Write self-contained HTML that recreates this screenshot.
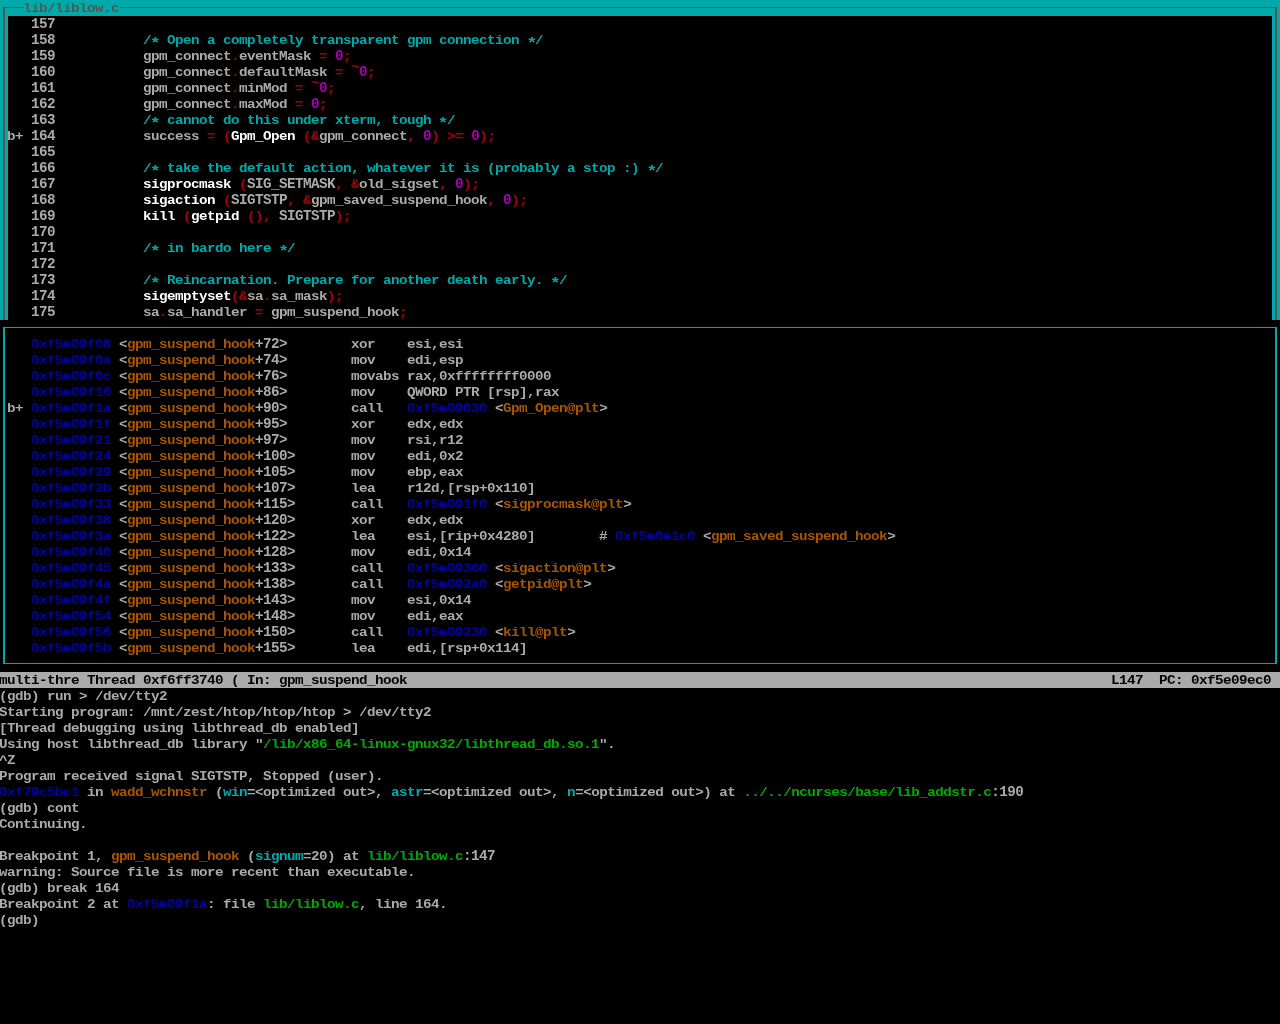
<!DOCTYPE html>
<html lang="en">
<head>
<meta charset="utf-8">
<title>gdb - lib/liblow.c</title>
<style>
html,body{margin:0;padding:0;background:#000;}
body{width:1280px;height:1024px;overflow:hidden;position:relative;}
#scr{will-change:transform;position:absolute;left:0;top:0;width:1280px;height:1024px;background:#000;overflow:hidden;
 font-family:"Liberation Mono","DejaVu Sans Mono",monospace;font-size:13.33px;font-weight:bold;line-height:16px;
 letter-spacing:-0.52161px;font-kerning:none;font-variant-ligatures:none;white-space:pre;color:#AAAAAA;tab-size:8;}
.bx{position:absolute;}
.ln{position:absolute;left:-0.779px;width:1200px;transform-origin:0 0;transform:scaleX(1.07);height:16px;margin:0;overflow:visible;}
.ln span.t{position:relative;top:-5px;}
.ln span.a{display:inline-block;position:relative;top:4px;transform:scale(1.25,1.15);}
.ln span.u{display:inline-block;transform-origin:0 11px;transform:scaleY(1.12);}
.k{color:#000000}.r{color:#AA0000}.g{color:#00AA00}.y{color:#AA5500}.b{color:#0000AA}.m{color:#AA00AA}
.c{color:#00AAAA}.w{color:#AAAAAA}.d{color:#555555}.h{color:#FFFFFF}
</style>
</head>
<body>
<div id="scr">
<div class="bx" style="left:0px;top:0px;width:1280px;height:16px;background:#00AAAA"></div>
<div class="bx" style="left:0px;top:16px;width:8px;height:304px;background:#00AAAA"></div>
<div class="bx" style="left:1272px;top:16px;width:8px;height:304px;background:#00AAAA"></div>
<div class="bx" style="left:3px;top:7px;width:21px;height:1px;background:#555555"></div>
<div class="bx" style="left:120px;top:7px;width:1157px;height:1px;background:#555555"></div>
<div class="bx" style="left:3px;top:7px;width:2px;height:313px;background:#555555"></div>
<div class="bx" style="left:1275px;top:7px;width:2px;height:313px;background:#555555"></div>
<div class="bx" style="left:3px;top:327px;width:1274px;height:1px;background:#00AAAA"></div>
<div class="bx" style="left:3px;top:663px;width:1274px;height:1px;background:#00AAAA"></div>
<div class="bx" style="left:3px;top:327px;width:2px;height:337px;background:#00AAAA"></div>
<div class="bx" style="left:1275px;top:327px;width:2px;height:337px;background:#00AAAA"></div>
<div class="bx" style="left:0px;top:672px;width:1280px;height:16px;background:#AAAAAA"></div>
<div class="ln" style="top:1px">   <span class="d">lib/liblow.c</span></div>
<div class="ln" style="top:17px">    <span class="u">157</span></div>
<div class="ln" style="top:33px">    <span class="u">158</span>           <span class="c">/<span class="a">*</span> Open a completely transparent gpm connection <span class="a">*</span>/</span></div>
<div class="ln" style="top:49px">    <span class="u">159</span>           gpm_connect<span class="r">.</span>eventMask <span class="r">=</span> <span class="m u">0</span><span class="r">;</span></div>
<div class="ln" style="top:65px">    <span class="u">160</span>           gpm_connect<span class="r">.</span>defaultMask <span class="r">=</span> <span class="r t">~</span><span class="m u">0</span><span class="r">;</span></div>
<div class="ln" style="top:81px">    <span class="u">161</span>           gpm_connect<span class="r">.</span>minMod <span class="r">=</span> <span class="r t">~</span><span class="m u">0</span><span class="r">;</span></div>
<div class="ln" style="top:97px">    <span class="u">162</span>           gpm_connect<span class="r">.</span>maxMod <span class="r">=</span> <span class="m u">0</span><span class="r">;</span></div>
<div class="ln" style="top:113px">    <span class="u">163</span>           <span class="c">/<span class="a">*</span> cannot do this under xterm, tough <span class="a">*</span>/</span></div>
<div class="ln" style="top:129px"> b+ <span class="u">164</span>           success <span class="r">=</span> <span class="r">(</span><span class="h">Gpm_Open</span> <span class="r">(&amp;</span>gpm_connect<span class="r">,</span> <span class="m u">0</span><span class="r">)</span> <span class="r">&gt;=</span> <span class="m u">0</span><span class="r">);</span></div>
<div class="ln" style="top:145px">    <span class="u">165</span></div>
<div class="ln" style="top:161px">    <span class="u">166</span>           <span class="c">/<span class="a">*</span> take the default action, whatever it is (probably a stop :) <span class="a">*</span>/</span></div>
<div class="ln" style="top:177px">    <span class="u">167</span>           <span class="h">sigprocmask</span> <span class="r">(</span><span class="u">SIG_SETMASK</span><span class="r">,</span> <span class="r">&amp;</span>old_sigset<span class="r">,</span> <span class="m u">0</span><span class="r">);</span></div>
<div class="ln" style="top:193px">    <span class="u">168</span>           <span class="h">sigaction</span> <span class="r">(</span><span class="u">SIGTSTP</span><span class="r">,</span> <span class="r">&amp;</span>gpm_saved_suspend_hook<span class="r">,</span> <span class="m u">0</span><span class="r">);</span></div>
<div class="ln" style="top:209px">    <span class="u">169</span>           <span class="h">kill</span> <span class="r">(</span><span class="h">getpid</span> <span class="r">(),</span> <span class="u">SIGTSTP</span><span class="r">);</span></div>
<div class="ln" style="top:225px">    <span class="u">170</span></div>
<div class="ln" style="top:241px">    <span class="u">171</span>           <span class="c">/<span class="a">*</span> in bardo here <span class="a">*</span>/</span></div>
<div class="ln" style="top:257px">    <span class="u">172</span></div>
<div class="ln" style="top:273px">    <span class="u">173</span>           <span class="c">/<span class="a">*</span> Reincarnation. Prepare for another death early. <span class="a">*</span>/</span></div>
<div class="ln" style="top:289px">    <span class="u">174</span>           <span class="h">sigemptyset</span><span class="r">(&amp;</span>sa<span class="r">.</span>sa_mask<span class="r">);</span></div>
<div class="ln" style="top:305px">    <span class="u">175</span>           sa<span class="r">.</span>sa_handler <span class="r">=</span> gpm_suspend_hook<span class="r">;</span></div>
<div class="ln" style="top:337px">    <span class="b">0xf5e09f08</span> &lt;<span class="y">gpm_suspend_hook</span><span class="u">+72&gt;</span>        xor    esi,esi</div>
<div class="ln" style="top:353px">    <span class="b">0xf5e09f0a</span> &lt;<span class="y">gpm_suspend_hook</span><span class="u">+74&gt;</span>        mov    edi,esp</div>
<div class="ln" style="top:369px">    <span class="b">0xf5e09f0c</span> &lt;<span class="y">gpm_suspend_hook</span><span class="u">+76&gt;</span>        movabs rax,0xffffffff0000</div>
<div class="ln" style="top:385px">    <span class="b">0xf5e09f16</span> &lt;<span class="y">gpm_suspend_hook</span><span class="u">+86&gt;</span>        mov    QWORD PTR [rsp],rax</div>
<div class="ln" style="top:401px"> b+ <span class="b">0xf5e09f1a</span> &lt;<span class="y">gpm_suspend_hook</span><span class="u">+90&gt;</span>        call   <span class="b">0xf5e09030</span> &lt;<span class="y">Gpm_Open@plt</span>&gt;</div>
<div class="ln" style="top:417px">    <span class="b">0xf5e09f1f</span> &lt;<span class="y">gpm_suspend_hook</span><span class="u">+95&gt;</span>        xor    edx,edx</div>
<div class="ln" style="top:433px">    <span class="b">0xf5e09f21</span> &lt;<span class="y">gpm_suspend_hook</span><span class="u">+97&gt;</span>        mov    rsi,r12</div>
<div class="ln" style="top:449px">    <span class="b">0xf5e09f24</span> &lt;<span class="y">gpm_suspend_hook</span><span class="u">+100&gt;</span>       mov    edi,0x2</div>
<div class="ln" style="top:465px">    <span class="b">0xf5e09f29</span> &lt;<span class="y">gpm_suspend_hook</span><span class="u">+105&gt;</span>       mov    ebp,eax</div>
<div class="ln" style="top:481px">    <span class="b">0xf5e09f2b</span> &lt;<span class="y">gpm_suspend_hook</span><span class="u">+107&gt;</span>       lea    r12d,[rsp+0x110]</div>
<div class="ln" style="top:497px">    <span class="b">0xf5e09f33</span> &lt;<span class="y">gpm_suspend_hook</span><span class="u">+115&gt;</span>       call   <span class="b">0xf5e091f0</span> &lt;<span class="y">sigprocmask@plt</span>&gt;</div>
<div class="ln" style="top:513px">    <span class="b">0xf5e09f38</span> &lt;<span class="y">gpm_suspend_hook</span><span class="u">+120&gt;</span>       xor    edx,edx</div>
<div class="ln" style="top:529px">    <span class="b">0xf5e09f3a</span> &lt;<span class="y">gpm_suspend_hook</span><span class="u">+122&gt;</span>       lea    esi,[rip+0x4280]        # <span class="b">0xf5e0e1c0</span> &lt;<span class="y">gpm_saved_suspend_hook</span>&gt;</div>
<div class="ln" style="top:545px">    <span class="b">0xf5e09f40</span> &lt;<span class="y">gpm_suspend_hook</span><span class="u">+128&gt;</span>       mov    edi,0x14</div>
<div class="ln" style="top:561px">    <span class="b">0xf5e09f45</span> &lt;<span class="y">gpm_suspend_hook</span><span class="u">+133&gt;</span>       call   <span class="b">0xf5e09360</span> &lt;<span class="y">sigaction@plt</span>&gt;</div>
<div class="ln" style="top:577px">    <span class="b">0xf5e09f4a</span> &lt;<span class="y">gpm_suspend_hook</span><span class="u">+138&gt;</span>       call   <span class="b">0xf5e092a0</span> &lt;<span class="y">getpid@plt</span>&gt;</div>
<div class="ln" style="top:593px">    <span class="b">0xf5e09f4f</span> &lt;<span class="y">gpm_suspend_hook</span><span class="u">+143&gt;</span>       mov    esi,0x14</div>
<div class="ln" style="top:609px">    <span class="b">0xf5e09f54</span> &lt;<span class="y">gpm_suspend_hook</span><span class="u">+148&gt;</span>       mov    edi,eax</div>
<div class="ln" style="top:625px">    <span class="b">0xf5e09f56</span> &lt;<span class="y">gpm_suspend_hook</span><span class="u">+150&gt;</span>       call   <span class="b">0xf5e09230</span> &lt;<span class="y">kill@plt</span>&gt;</div>
<div class="ln" style="top:641px">    <span class="b">0xf5e09f5b</span> &lt;<span class="y">gpm_suspend_hook</span><span class="u">+155&gt;</span>       lea    edi,[rsp+0x114]</div>
<div class="ln k" style="top:673px">multi-thre Thread 0xf6ff3740 ( In: gpm_suspend_hook                                                                                        L147  PC: 0xf5e09ec0</div>
<div class="ln" style="top:689px">(gdb) run &gt; /dev/tty2</div>
<div class="ln" style="top:705px">Starting program: /mnt/zest/htop/htop/htop &gt; /dev/tty2</div>
<div class="ln" style="top:721px">[Thread debugging using libthread_db enabled]</div>
<div class="ln" style="top:737px">Using host libthread_db library "<span class="g">/lib/x86_64-linux-gnux32/libthread_db.so.1</span>".</div>
<div class="ln" style="top:753px">^Z</div>
<div class="ln" style="top:769px">Program received signal SIGTSTP, Stopped (user).</div>
<div class="ln" style="top:785px"><span class="b">0xf79c5bc1</span> in <span class="y">wadd_wchnstr</span> (<span class="c">win</span>=&lt;optimized out&gt;, <span class="c">astr</span>=&lt;optimized out&gt;, <span class="c">n</span>=&lt;optimized out&gt;) at <span class="g">../../ncurses/base/lib_addstr.c</span><span class="u">:190</span></div>
<div class="ln" style="top:801px">(gdb) cont</div>
<div class="ln" style="top:817px">Continuing.</div>
<div class="ln" style="top:849px">Breakpoint 1, <span class="y">gpm_suspend_hook</span> (<span class="c">signum</span>=20) at <span class="g">lib/liblow.c</span><span class="u">:147</span></div>
<div class="ln" style="top:865px">warning: Source file is more recent than executable.</div>
<div class="ln" style="top:881px">(gdb) break 164</div>
<div class="ln" style="top:897px">Breakpoint 2 at <span class="b">0xf5e09f1a</span>: file <span class="g">lib/liblow.c</span>, line 164.</div>
<div class="ln" style="top:913px">(gdb) </div>
</div>
</body>
</html>
